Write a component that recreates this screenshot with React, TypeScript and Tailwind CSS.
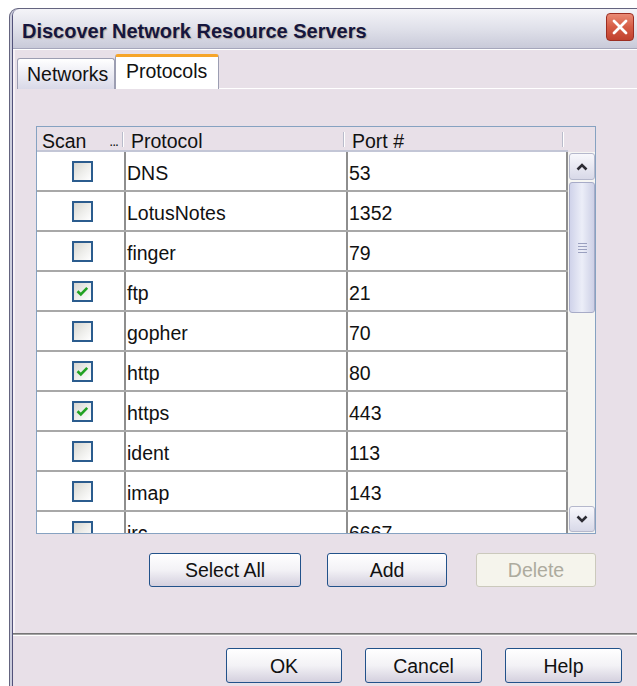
import React from 'react';

type Row = { name: string; port: string; on: boolean };

const protocols: Row[] = [
  { name: 'DNS', port: '53', on: false },
  { name: 'LotusNotes', port: '1352', on: false },
  { name: 'finger', port: '79', on: false },
  { name: 'ftp', port: '21', on: true },
  { name: 'gopher', port: '70', on: false },
  { name: 'http', port: '80', on: true },
  { name: 'https', port: '443', on: true },
  { name: 'ident', port: '113', on: false },
  { name: 'imap', port: '143', on: false },
  { name: 'irc', port: '6667', on: false },
];

const CheckBox: React.FC<{ checked: boolean }> = ({ checked }) => (
  <div className="w-[21px] h-[21px] border-2 border-[#2b5c8e] bg-linear-to-br from-[#d6d6d0] via-[#ededea] to-white flex items-center justify-center">
    {checked && (
      <svg width="13" height="11" viewBox="0 0 13 11">
        <path d="M1.5 5.2 L4.8 8.4 L11.2 1.8" stroke="#22a222" strokeWidth="2.6" fill="none" />
      </svg>
    )}
  </div>
);

const Button: React.FC<{ label: string; className: string; disabled?: boolean }> = ({ label, className, disabled }) => (
  <button
    className={
      disabled
        ? `${className} rounded-[3px] border border-[#cbc9bc] bg-[#f5f4ec] text-[#adab9e] text-[19.5px] leading-none flex items-center justify-center pt-[2px]`
        : `${className} rounded-[3px] border border-[#22528a] bg-linear-to-b from-white via-[#f3f2f6] to-[#d4d0de] text-[#111] text-[19.5px] leading-none flex items-center justify-center pt-[2px]`
    }
  >
    {label}
  </button>
);

const HeaderTick = () => <div className="w-[2px] h-[15px] border-l border-[#b9bccb] bg-white" />;

const ScrollArrow: React.FC<{ up?: boolean; className: string }> = ({ up, className }) => (
  <div className={`${className} w-full rounded-[3px] border border-[#b5b8cc] bg-linear-to-b from-[#f8f8fc] to-[#d8d9e8] flex items-center justify-center`}>
    <svg width="14" height="10" viewBox="0 0 14 10">
      <path d={up ? 'M2.5 7.5 L7 3 L11.5 7.5' : 'M2.5 2.5 L7 7 L11.5 2.5'} stroke="#2c2c34" strokeWidth="2.6" fill="none" />
    </svg>
  </div>
);

export default function App() {
  return (
    <div className="w-[637px] h-[686px] overflow-hidden bg-white pt-[8px] pl-[9px] font-['Liberation_Sans',Arial,sans-serif] text-[#111]">
      {/* window frame */}
      <div className="h-[700px] rounded-tl-[9px] bg-[#64647f] pl-px pt-px">
        <div className="h-full rounded-tl-[8px] bg-[#cdcedd] pl-[2px]">
          <div className="h-full rounded-tl-[7px] bg-[#52527a] pl-px flex flex-col">
            {/* title bar */}
            <div className="h-[40px] rounded-tl-[6px] bg-linear-to-b from-[#f4f4f8] via-[#e0e1ea] to-[#c9cad9] border-b border-[#a5a6bb] flex">
              <div className="flex-1 pl-[9px] pt-[10px] text-[20px] font-bold leading-[24px] text-[#16163e] [text-shadow:1px_1px_1px_rgba(120,90,40,0.35)]">
                Discover Network Resource Servers
              </div>
              <div className="mt-[4px] mr-[3px] w-[28px] h-[28px] rounded-[4px] border border-[#9c2e22] bg-linear-to-b from-[#e98a74] via-[#d65c45] to-[#c0412e] flex items-center justify-center">
                <svg width="18" height="18" viewBox="0 0 18 18">
                  <path d="M3 3 L15 15 M15 3 L3 15" stroke="white" strokeWidth="2.8" strokeLinecap="round" />
                </svg>
              </div>
            </div>

            {/* dialog body */}
            <div className="flex-1 bg-[#e8e0e8] border-t border-white flex flex-col">
              <div className="h-[583px] border-l-2 border-[#f6f1f6] flex flex-col">
                {/* tabs */}
                <div className="pt-[4px] pl-[2px] flex items-end h-[39px]">
                  <div className="w-[98px] h-[31px] rounded-t-[3px] border border-b-0 border-[#9c9eb2] bg-linear-to-b from-white to-[#d9d9e8] pl-[9px] pt-[2px] flex items-center text-[19.5px] leading-none">
                    Networks
                  </div>
                  <div className="w-[104px] h-[35px] rounded-t-[3px] border-x border-[#9c9eb2] border-t-[3px] border-t-[#f6a52a] bg-white pl-[10px] pb-[2px] flex items-center text-[19.5px] leading-none">
                    Protocols
                  </div>
                  <div className="flex-1 border-b border-white" />
                </div>

                {/* protocol table */}
                <div className="mt-[37px] ml-[21px] w-[560px] h-[408px] border border-[#86a2c1] flex flex-col">
                  <div className="h-[25px] flex text-[19.5px] leading-[19px]">
                    <div className="w-[89px] border-b-2 border-[#c3c6d6] flex items-start pt-[5px]">
                      <span className="pl-[5px]">Scan</span>
                      <span className="ml-auto text-[14px] leading-[19px] tracking-[-1px] pr-[4px]">...</span>
                      <HeaderTick />
                      <div className="w-[2px]" />
                    </div>
                    <div className="w-[222px] border-b-2 border-[#c3c6d6] flex items-start pt-[5px]">
                      <span className="pl-[5px]">Protocol</span>
                      <div className="ml-auto mr-[3px]">
                        <HeaderTick />
                      </div>
                    </div>
                    <div className="w-[220px] border-b-2 border-[#c3c6d6] flex items-start pt-[5px]">
                      <span className="pl-[4px]">Port #</span>
                      <div className="ml-auto mr-[4px]">
                        <HeaderTick />
                      </div>
                    </div>
                  </div>

                  <div className="flex-1 flex min-h-0">
                    <div className="w-[531px] bg-white overflow-hidden">
                      {protocols.map((p) => (
                        <div key={p.name} className="h-[40px] border-b-2 border-[#a8a8a8] flex text-[19.5px] leading-none">
                          <div className="w-[89px] border-r-2 border-[#8e8e8e] flex items-center justify-center pl-[3px] pt-[1px]">
                            <CheckBox checked={p.on} />
                          </div>
                          <div className="w-[222px] border-r-2 border-[#8e8e8e] flex items-center pl-[1px] pt-[5px]">{p.name}</div>
                          <div className="w-[220px] border-r-2 border-[#8e8e8e] flex items-center pl-[1px] pt-[5px]">{p.port}</div>
                        </div>
                      ))}
                    </div>
                    {/* vertical scrollbar */}
                    <div className="w-[27px] bg-[#f6f6f3] flex flex-col pl-px pt-px pb-px">
                      <ScrollArrow up className="h-[27px]" />
                      <div className="mt-[2px] h-[131px] w-full rounded-[3px] border border-[#a7abc7] bg-linear-to-r from-[#d0d3ea] via-[#eceef8] to-[#cdd0e6] flex flex-col items-center justify-center gap-[2px]">
                        <div className="w-[9px] h-px bg-[#9aa0bf]" />
                        <div className="w-[9px] h-px bg-[#9aa0bf]" />
                        <div className="w-[9px] h-px bg-[#9aa0bf]" />
                        <div className="w-[9px] h-px bg-[#9aa0bf]" />
                      </div>
                      <div className="flex-1" />
                      <ScrollArrow className="h-[26px]" />
                    </div>
                  </div>
                </div>

                {/* list actions */}
                <div className="mt-[19px] ml-[134px] flex">
                  <Button label="Select All" className="w-[152px] h-[34px]" />
                  <Button label="Add" className="ml-[26px] w-[120px] h-[34px]" />
                  <Button label="Delete" className="ml-[29px] w-[120px] h-[34px]" disabled />
                </div>
              </div>

              {/* separator */}
              <div className="h-[3px] border-t border-[#767676] bg-[#a3a3a3] border-b border-b-white" />

              {/* dialog buttons */}
              <div className="pt-[12px] pr-[15px] flex justify-end gap-[23px]">
                <Button label="OK" className="w-[116px] h-[35px]" />
                <Button label="Cancel" className="w-[117px] h-[35px]" />
                <Button label="Help" className="w-[117px] h-[35px]" />
              </div>
            </div>
          </div>
        </div>
      </div>
    </div>
  );
}
